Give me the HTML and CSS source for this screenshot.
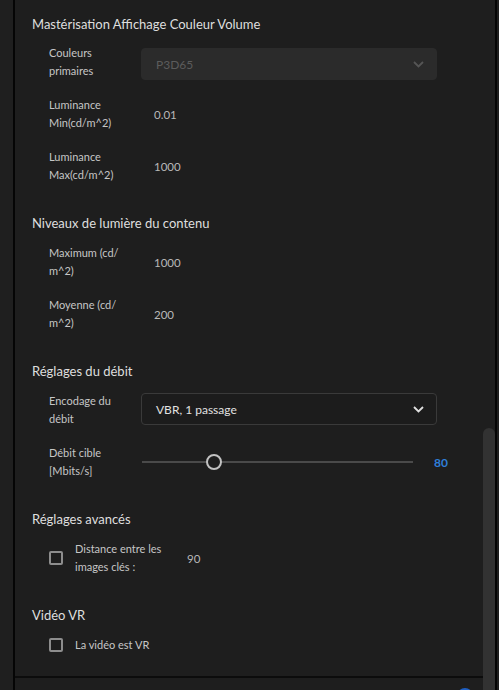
FILE: index.html
```html
<!DOCTYPE html>
<html lang="fr">
<head>
<meta charset="utf-8">
<link rel="stylesheet" href="styles.css">
</head>
<body>
<div class="app">
  <div class="strip"></div>
  <div class="divider"></div>
  <div class="main">
    <div class="content">
      <section class="section first">
        <h2 class="heading">Mastérisation Affichage Couleur Volume</h2>
        <div class="row">
          <div class="label">Couleurs<br>primaires</div>
          <div class="select disabled">
            <span>P3D65</span>
            <svg class="chev" width="11" height="7" viewBox="0 0 11 7"><path d="M1 1 L5.5 5.5 L10 1" fill="none" stroke="currentColor" stroke-width="1.8"/></svg>
          </div>
        </div>
        <div class="row">
          <div class="label">Luminance<br>Min(cd/m^2)</div>
          <div class="value">0.01</div>
        </div>
        <div class="row">
          <div class="label">Luminance<br>Max(cd/m^2)</div>
          <div class="value">1000</div>
        </div>
      </section>
      <section class="section">
        <h2 class="heading">Niveaux de lumière du contenu</h2>
        <div class="row">
          <div class="label">Maximum (cd/<br>m^2)</div>
          <div class="value">1000</div>
        </div>
        <div class="row">
          <div class="label">Moyenne (cd/<br>m^2)</div>
          <div class="value">200</div>
        </div>
      </section>
      <section class="section">
        <h2 class="heading">Réglages du débit</h2>
        <div class="row">
          <div class="label">Encodage du<br>débit</div>
          <div class="select">
            <span>VBR, 1 passage</span>
            <svg class="chev" width="11" height="7" viewBox="0 0 11 7"><path d="M1 1 L5.5 5.5 L10 1" fill="none" stroke="currentColor" stroke-width="1.8"/></svg>
          </div>
        </div>
        <div class="row">
          <div class="label">Débit cible<br>[Mbits/s]</div>
          <div class="slider">
            <div class="track"><div class="thumb"></div></div>
          </div>
          <div class="slider-value">80</div>
        </div>
      </section>
      <section class="section">
        <h2 class="heading">Réglages avancés</h2>
        <div class="row check-row">
          <div class="checkbox"></div>
          <div class="check-label">Distance entre les<br>images clés :</div>
          <div class="check-value">90</div>
        </div>
      </section>
      <section class="section">
        <h2 class="heading">Vidéo VR</h2>
        <div class="row check-row single">
          <div class="checkbox"></div>
          <div class="check-label">La vidéo est VR</div>
        </div>
      </section>
    </div>
    <div class="footer">
      <div class="blue-btn"></div>
    </div>
  </div>
  <div class="scrollbar"><div class="thumb-bar"></div></div>
  <div class="divider"></div>
  <div class="rpad"></div>
</div>
</body>
</html>
```
FILE: styles.css
```css
html, body {
  margin: 0;
  padding: 0;
  height: 100%;
  overflow: hidden;
  background: #1e1e1e;
}
body {
  font-family: Lato, "Open Sans", sans-serif;
  color: #c8c8c8;
}
.app {
  display: flex;
  height: 690px;
}
.strip {
  width: 13px;
  background: #1f1f1f;
}
.divider {
  width: 2px;
  background: #050505;
}
.main {
  width: 468px;
  display: flex;
  flex-direction: column;
  background: #1e1e1e;
}
.content {
  padding: 14px 0 0 17px;
  height: 678px;
  box-sizing: border-box;
  border-bottom: 2px solid #0c0c0c;
}
.section {
  margin-top: 29px;
}
.section.first {
  margin-top: 0;
}
.heading {
  margin: 0 0 11px 0;
  font-size: 13px;
  font-weight: 400;
  line-height: 20px;
  height: 20px;
  color: #dedede;
}
.section.first .heading {
  margin-bottom: 10px;
}
.row {
  display: flex;
  align-items: center;
  margin-bottom: 16px;
  padding-left: 17px;
}
.label {
  width: 92px;
  font-size: 11px;
  line-height: 18px;
  color: #c6c6c6;
}
.value {
  padding-left: 13px;
  font-size: 11.5px;
  color: #b8b8b8;
}
.select {
  width: 296px;
  height: 32px;
  box-sizing: border-box;
  border-radius: 4px;
  display: flex;
  align-items: center;
  justify-content: space-between;
  padding: 0 12px 0 14px;
  font-size: 12px;
  color: #e2e2e2;
  border: 1px solid #3a3a3a;
  background: #1c1c1c;
  margin-top: -2px;
}
.select.disabled {
  border-color: #2b2b2b;
  background: #2b2b2b;
  color: #5c5c5c;
  margin-top: 4px;
}
.chev {
  display: block;
  color: #e0e0e0;
}
.select.disabled .chev {
  color: #555;
}
.slider {
  width: 271px;
  height: 20px;
  display: flex;
  align-items: center;
  margin-left: 1px;
}
.track {
  position: relative;
  width: 100%;
  height: 2px;
  background: #4a4a4a;
}
.thumb {
  position: absolute;
  left: 64px;
  top: -7px;
  width: 12px;
  height: 12px;
  border: 2px solid #c2c2c2;
  border-radius: 50%;
  background: #1e1e1e;
}
.slider-value {
  margin-left: 21px;
  font-size: 12px;
  font-weight: 700;
  color: #2f7fd8;
}
.checkbox {
  width: 14px;
  height: 14px;
  box-sizing: border-box;
  border: 2px solid #8d8d8d;
  border-radius: 2px;
}
.check-label {
  margin-left: 12px;
  width: 112px;
  font-size: 11px;
  line-height: 18px;
  color: #c6c6c6;
}
.check-value {
  font-size: 11.5px;
  color: #b8b8b8;
}
.check-row.single {
  margin-top: 5px;
}
.check-row.single .check-label {
  width: auto;
}
.footer {
  position: relative;
  flex: 1;
}
.blue-btn {
  position: absolute;
  left: 442px;
  top: 10px;
  width: 16px;
  height: 16px;
  border-radius: 8px;
  background: #1f5fc2;
}
.scrollbar {
  width: 12px;
  display: flex;
  flex-direction: column;
  justify-content: flex-end;
  background: #1e1e1e;
}
.thumb-bar {
  height: 262px;
  background: #323232;
  border-radius: 6px 6px 0 0;
}
.rpad {
  width: 2px;
  background: #1e1e1e;
}
```
